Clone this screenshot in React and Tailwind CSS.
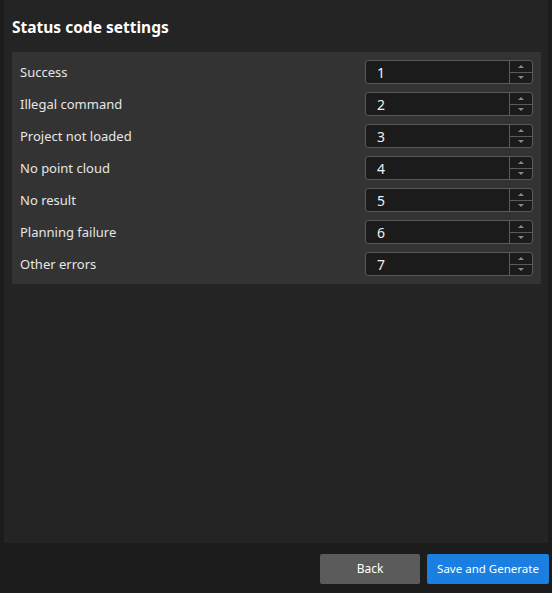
import React from 'react';

const codes = [
  ['Success', '1'],
  ['Illegal command', '2'],
  ['Project not loaded', '3'],
  ['No point cloud', '4'],
  ['No result', '5'],
  ['Planning failure', '6'],
  ['Other errors', '7'],
];

function SpinBox({ value }) {
  return (
    <div className="flex h-[24px] w-[168px] rounded-[3px] border border-[#5a5a5a] bg-[#1b1b1b]">
      <div className="flex flex-1 items-center pl-[11px] text-[14px] text-[#f0f0f0]">{value}</div>
      <div className="flex w-[23px] flex-col border-l border-[#5a5a5a]">
        <div className="flex flex-1 items-center justify-center border-b border-[#5a5a5a]">
          <div className="h-0 w-0 border-x-[3px] border-b-[3px] border-x-transparent border-b-[#8a8a8a]" />
        </div>
        <div className="flex flex-1 items-center justify-center">
          <div className="h-0 w-0 border-x-[3px] border-t-[3px] border-x-transparent border-t-[#8a8a8a]" />
        </div>
      </div>
    </div>
  );
}

export default function App() {
  return (
    <div
      className="flex h-[593px] w-[552px] flex-col bg-[#1c1c1c] text-[#e6e6e6]"
      style={{ fontFamily: '"Noto Sans", "Open Sans", sans-serif' }}
    >
      <div className="ml-[4px] mr-[4px] flex h-[543px] flex-col bg-[#242424] px-[8px]">
        <h1 className="pt-[14px] pb-[12px] text-[15.5px] font-bold leading-[26px] text-white">
          Status code settings
        </h1>
        <div className="mr-[-1px] flex flex-col bg-[#333333] py-[4px] pl-[8px] pr-[8px]">
          {codes.map(([label, value]) => (
            <div key={label} className="flex h-[32px] items-center justify-between">
              <span className="pt-[2px] text-[13px]">{label}</span>
              <SpinBox value={value} />
            </div>
          ))}
        </div>
      </div>
      <div className="flex justify-end gap-[7px] pr-[3px] pt-[11px]">
        <button className="h-[30px] w-[100px] rounded-[2px] bg-[#5b5b5b] text-[12px] text-white">
          Back
        </button>
        <button className="h-[30px] w-[122px] rounded-[2px] bg-[#1a7fe0] text-[11.5px] text-white">
          Save and Generate
        </button>
      </div>
    </div>
  );
}
